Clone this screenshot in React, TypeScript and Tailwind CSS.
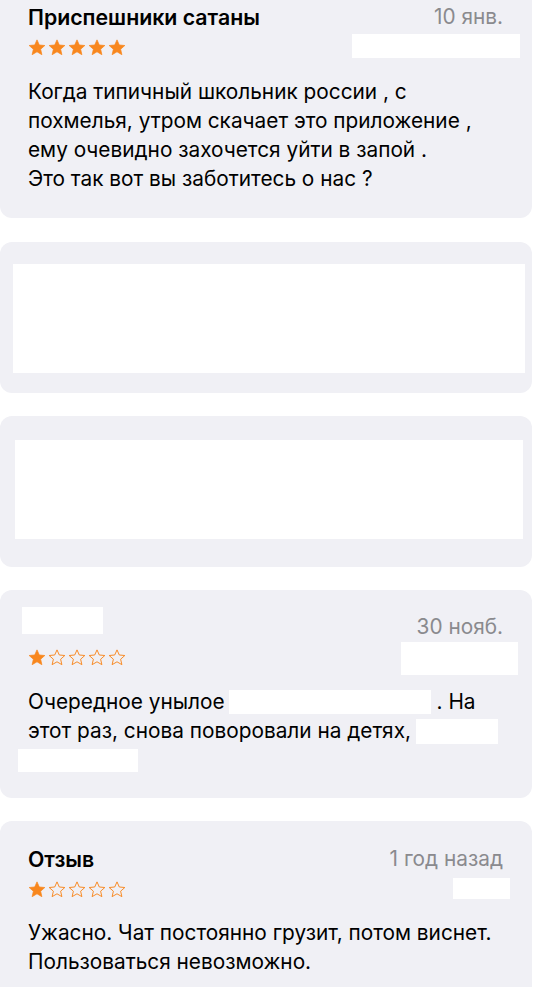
import React from "react";

const ORANGE = "#f8871e";

function Star({ filled }: { filled: boolean }) {
  return (
    <svg width="18" height="17" viewBox="0 0 24 23" className="shrink-0">
      <path
        d="M12 1.2l3.1 6.9 7.5.7-5.7 5 1.7 7.4L12 17.3l-6.6 3.9 1.7-7.4-5.7-5 7.5-.7z"
        fill={filled ? ORANGE : "none"}
        stroke={ORANGE}
        strokeWidth={filled ? 1 : 1.3}
        strokeLinejoin="round"
      />
    </svg>
  );
}

function Stars({ n }: { n: number }) {
  return (
    <div className="mt-[8px] flex h-[16px] items-center gap-[2px]">
      {[0, 1, 2, 3, 4].map((i) => (
        <Star key={i} filled={i < n} />
      ))}
    </div>
  );
}

export default function App() {
  return (
    <div
      className="min-h-[987px] overflow-hidden bg-white text-[20.8px] leading-[28px] text-black"
      style={{ fontFamily: "Inter, 'Noto Sans', 'Liberation Sans', sans-serif" }}
    >
      <div className="-mt-[21px] flex w-[532px] flex-col gap-[23px]">
        {/* Card 1 */}
        <div className="mb-[1px] rounded-[12px] bg-[#f0f0f5] pb-[25px] pl-[28px] pr-[29px] pt-[24px]">
          <div className="flex items-start justify-between">
            <div className="flex flex-col">
              <div className="text-[21.3px] font-semibold">Приспешники сатаны</div>
              <Stars n={5} />
            </div>
            <div className="relative flex flex-col items-end">
              <div className="text-[#8a8a8e]">10 янв.</div>
              <div className="absolute right-[-17px] top-[31px] h-[24px] w-[168px] bg-white" />
            </div>
          </div>
          <div className="mt-[22px] leading-[29px]">
            <div>Когда типичный школьник россии , с</div>
            <div>похмелья, утром скачает это приложение ,</div>
            <div>ему очевидно захочется уйти в запой .</div>
            <div>Это так вот вы заботитесь о нас ?</div>
          </div>
        </div>

        {/* Card 2 */}
        <div className="flex h-[151px] flex-col rounded-[12px] bg-[#f0f0f5] pl-[13px] pr-[7px] pt-[22px]">
          <div className="h-[109px] bg-white" />
        </div>

        {/* Card 3 */}
        <div className="flex h-[151px] flex-col rounded-[12px] bg-[#f0f0f5] pl-[15px] pr-[9px] pt-[24px]">
          <div className="h-[99px] bg-white" />
        </div>

        {/* Card 4 */}
        <div className="rounded-[12px] bg-[#f0f0f5] pb-[24px] pl-[28px] pr-[29px] pt-[23px]">
          <div className="flex items-start justify-between">
            <div className="flex flex-col">
              <div className="relative h-[28px] w-[80px]">
                <div className="absolute left-[-6px] top-[-6px] h-[27px] w-[81px] bg-white" />
              </div>
              <Stars n={1} />
            </div>
            <div className="relative flex flex-col items-end">
              <div className="text-[#8a8a8e]">30 нояб.</div>
              <div className="absolute right-[-15px] top-[29px] h-[33px] w-[117px] bg-white" />
            </div>
          </div>
          <div className="mt-[22px] leading-[29px]">
            <div className="flex items-center whitespace-nowrap">
              <span>Очередное унылое</span>
              <span className="ml-[4px] mr-[6px] inline-block h-[24px] w-[202px] bg-white" />
              <span>. На</span>
            </div>
            <div className="flex items-center whitespace-nowrap">
              <span>этот раз, снова поворовали на детях,</span>
              <span className="ml-[5px] inline-block h-[25px] w-[82px] translate-y-[1px] bg-white" />
            </div>
            <div className="flex h-[29px] items-end">
              <span className="-ml-[10px] mb-[2px] inline-block h-[23px] w-[120px] bg-white" />
            </div>
          </div>
        </div>

        {/* Card 5 */}
        <div className="rounded-[12px] bg-[#f0f0f5] pb-[40px] pl-[28px] pr-[29px] pt-[24px]">
          <div className="flex items-start justify-between">
            <div className="flex flex-col">
              <div className="text-[21.3px] font-semibold">Отзыв</div>
              <Stars n={1} />
            </div>
            <div className="relative flex flex-col items-end">
              <div className="text-[#8a8a8e]">1 год назад</div>
              <div className="absolute right-[-7px] top-[33px] h-[21px] w-[57px] bg-white" />
            </div>
          </div>
          <div className="mt-[21px] leading-[29px]">
            <div>Ужасно. Чат постоянно грузит, потом виснет.</div>
            <div>Пользоваться невозможно.</div>
          </div>
        </div>
      </div>
    </div>
  );
}
